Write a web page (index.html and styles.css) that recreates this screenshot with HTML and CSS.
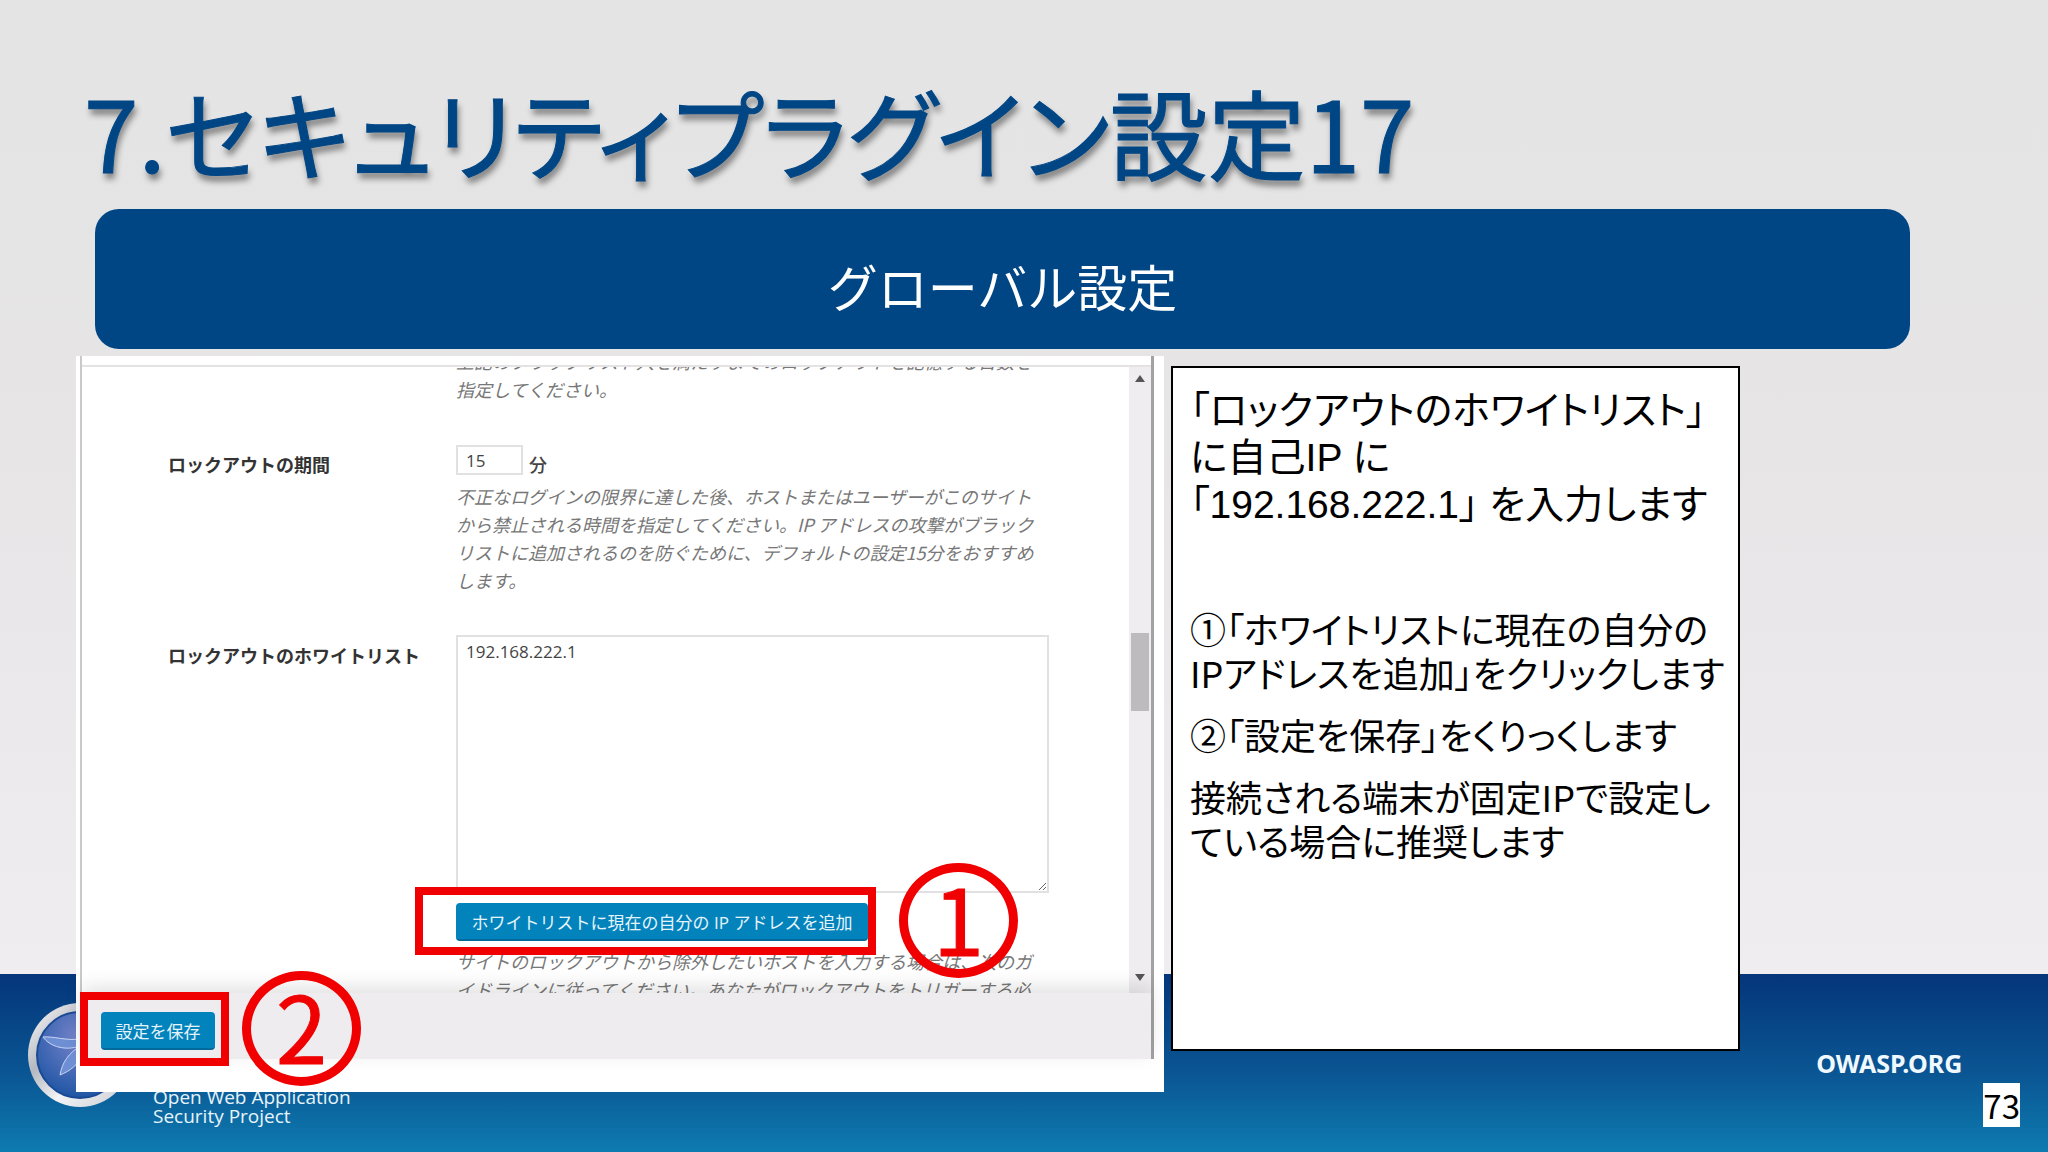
FILE: index.html
```html
<!DOCTYPE html>
<html lang="ja">
<head>
  <meta charset="UTF-8" />
  <meta name="viewport" content="width=device-width, initial-scale=1.0"/>
  <title>7.セキュリティプラグイン設定17</title>
  <link rel="stylesheet" href="styles.css">
</head>
<body>
  <div class="slide">
    <footer class="footer">
      <div class="brand">
        <svg class="brand-logo" viewBox="0 0 104 104" aria-hidden="true">
          <defs>
            <linearGradient id="ring" x1="0" y1="0" x2="1" y2="1">
              <stop offset="0" stop-color="#ffffff"/>
              <stop offset="0.35" stop-color="#b4b8c0"/>
              <stop offset="0.6" stop-color="#f4f4f6"/>
              <stop offset="1" stop-color="#c4c8ce"/>
            </linearGradient>
            <radialGradient id="disc" cx="0.5" cy="0.3" r="0.7">
              <stop offset="0" stop-color="#7a86cc"/>
              <stop offset="1" stop-color="#1f55a4"/>
            </radialGradient>
          </defs>
          <circle cx="52" cy="52" r="52" fill="url(#ring)"/>
          <circle cx="52" cy="52" r="43" fill="url(#disc)" stroke="#1a4a94" stroke-width="2"/>
          <path d="M15 34 C26 33 38 38 52 36 L52 43 C38 48 22 44 15 34 Z" fill="#6f8fd4" stroke="#c9d6f5" stroke-width="1"/>
          <path d="M32 72 C34 60 40 50 54 42 L56 50 C50 62 42 68 32 72 Z" fill="#6f8fd4" stroke="#c9d6f5" stroke-width="1"/>
        </svg>
        <p class="brand-name">Open Web Application<br>Security Project</p>
      </div>
      <a class="site-link" href="#">OWASP.ORG</a>
      <span class="page-number">73</span>
    </footer>

    <h1 class="title">7.セキュリティプラグイン設定17</h1>
    <div class="banner">グローバル設定</div>

    <div class="content">
      <form class="capture">
        <div class="window">
          <div class="scroll-area">
            <div class="settings">
              <p class="hint hint-first">上記のブラックリスト入を満たすまでのロックアウトを記憶する日数を<br>指定してください。</p>

              <label class="name" for="period">ロックアウトの期間</label>
              <div class="field">
                <div class="period">
                  <input class="text-box" id="period" type="text" value="15">
                  <span class="unit">分</span>
                </div>
                <p class="hint">不正なログインの限界に達した後、ホストまたはユーザーがこのサイト<br>から禁止される時間を指定してください。IP アドレスの攻撃がブラック<br>リストに追加されるのを防ぐために、デフォルトの設定15分をおすすめ<br>します。</p>
              </div>

              <label class="name" for="whitelist">ロックアウトのホワイトリスト</label>
              <div class="field">
                <textarea class="text-box list-box" id="whitelist">192.168.222.1</textarea>
                <div class="add-row">
                  <button class="btn btn-add" type="button">ホワイトリストに現在の自分の IP アドレスを追加</button>
                  <span class="mark mark-add"></span>
                </div>
                <p class="hint">サイトのロックアウトから除外したいホストを入力する場合は、次のガ<br>イドラインに従ってください。あなたがロックアウトをトリガーする必</p>
              </div>
            </div>
            <div class="scrollbar">
              <span class="arrow arrow-up"></span>
              <span class="thumb"></span>
              <span class="arrow arrow-down"></span>
            </div>
          </div>
          <div class="save-bar">
            <button class="btn btn-save" type="button">設定を保存</button>
            <span class="mark mark-save"></span>
          </div>
        </div>
        <span class="step step-one">1</span>
        <span class="step step-two">2</span>
      </form>

      <div class="notes">
        <p class="lead">「ロックアウトのホワイトリスト」<br>に自己IP に<br>「192.168.222.1」 を入力します</p>
        <p>①「ホワイトリストに現在の自分の<br>IPアドレスを追加」をクリックします</p>
        <p>②「設定を保存」をくりっくします</p>
        <p>接続される端末が固定IPで設定し<br>ている場合に推奨します</p>
      </div>
    </div>
  </div>
</body>
</html>
```

FILE: styles.css
```css
* {
  box-sizing: border-box;
}
body {
  margin: 0;
  font-family: "Noto Sans CJK JP", sans-serif;
  color: #000;
}
p {
  margin: 0;
}
.slide {
  position: relative;
  min-height: 100vh;
  overflow: hidden;
  background: linear-gradient(#e4e4e4, #e7e5e6 40%, #efedf0 84%);
}

/* title and banner */
.title {
  margin: 0;
  padding: 58px 84px 6px;
  font-size: 98px;
  font-weight: 400;
  line-height: 145px;
  font-feature-settings: "palt";
  color: #004685;
  -webkit-text-stroke: 1px #004685;
  text-shadow: 2px 6px 6px rgba(0, 0, 0, 0.45);
}
.banner {
  position: relative;
  display: flex;
  align-items: center;
  justify-content: center;
  height: 140px;
  margin: 0 138px 0 95px;
  padding-top: 12px;
  border-radius: 24px;
  background: #004685;
  color: #fff;
  font-size: 50px;
  line-height: 60px;
}

/* two boxes under the banner */
.content {
  position: relative;
  display: grid;
  grid-template-columns: minmax(0, 1088fr) minmax(0, 569fr) 301fr;
  align-items: start;
  gap: 7px;
  padding: 7px 0 60px 76px;
}
.capture {
  position: relative;
  padding: 0 10px 33px 4px;
  background: #fff;
}
.window {
  border-left: 2px solid #c9c9cb;
  border-right: 3px solid #a2a2a4;
  padding-top: 9px;
}
.scroll-area {
  display: flex;
  height: 628px;
  overflow: hidden;
  border-top: 2px solid #e4e2e2;
}
.settings {
  flex: 1;
  display: grid;
  grid-template-columns: 288px 1fr;
  align-content: start;
  row-gap: 41px;
  margin-top: -20px;
  padding: 0 80px 0 86px;
}
.hint {
  font-size: 18px;
  line-height: 28px;
  font-style: italic;
  color: #777;
  white-space: nowrap;
}
.hint-first {
  grid-column: 2;
}
.name {
  padding-top: 6px;
  font-size: 18px;
  font-weight: 700;
  line-height: 28px;
  color: #333;
}
.field {
  display: flex;
  flex-direction: column;
  gap: 6px;
}
.period {
  display: flex;
  align-items: center;
  gap: 6px;
}
.text-box {
  width: 67px;
  height: 30px;
  padding: 0 8px;
  border: 2px solid #e2e0e3;
  background: #fff;
  font-family: "Open Sans", sans-serif;
  font-size: 17px;
  color: #444;
}
.list-box {
  display: block;
  width: 100%;
  height: 258px;
  padding: 3px 8px;
}
.unit {
  padding-top: 8px;
  font-size: 18px;
  font-weight: 500;
  line-height: 24px;
  color: #444;
}
.btn {
  display: block;
  height: 38px;
  padding: 0;
  border: 0;
  border-bottom: 2px solid #016a9b;
  border-radius: 4px;
  background: #0383bc;
  color: #e6f4fa;
  font-family: "Open Sans", "Noto Sans CJK JP", sans-serif;
  font-size: 17px;
}
.add-row {
  position: relative;
  padding-top: 4px;
}
.btn-add {
  width: 412px;
}
.btn-save {
  width: 114px;
}
.mark {
  position: absolute;
  border: 8px solid #f00000;
}
.mark-add {
  top: -12px;
  left: -41px;
  width: 461px;
  height: 68px;
}
.scrollbar {
  flex: 0 0 22px;
  display: flex;
  flex-direction: column;
  align-items: center;
  padding: 8px 0 12px;
  background: #efedf0;
}
.arrow {
  border: 5px solid transparent;
}
.arrow-up {
  border-top: 0;
  border-bottom: 7px solid #555;
}
.thumb {
  width: 18px;
  height: 78px;
  margin: 251px 0 auto;
  background: #bdbbbe;
}
.arrow-down {
  border-bottom: 0;
  border-top: 7px solid #555;
}
.save-bar {
  position: relative;
  padding: 19px 19px 9px;
  background: #eeecef;
  box-shadow: 0 -6px 18px rgba(0, 0, 0, 0.12);
}
.mark-save {
  top: -1px;
  left: -2px;
  width: 149px;
  height: 74px;
}
.step {
  position: absolute;
  width: 119px;
  height: 115px;
  border: 9px solid #f00000;
  border-radius: 50%;
  color: #f00000;
  font-size: 92px;
  line-height: 88px;
  text-align: center;
  -webkit-text-stroke: 1px #f00000;
}
.step-one {
  right: 146px;
  bottom: 114px;
}
.step-two {
  left: 166px;
  bottom: 6px;
}

/* explanation on the right */
.notes {
  display: flex;
  flex-direction: column;
  gap: 18px;
  min-height: 685px;
  margin-top: 10px;
  padding: 19px 17px;
  border: 2px solid #000;
  background: #fff;
  font-size: 36px;
  line-height: 44px;
  font-feature-settings: "palt";
  white-space: nowrap;
}
.lead {
  margin-bottom: 60px;
  font-family: "Liberation Sans", "Noto Sans CJK JP", sans-serif;
  font-size: 39px;
  line-height: 47px;
}

/* blue band along the bottom edge */
.footer {
  position: absolute;
  right: 0;
  bottom: 0;
  left: 0;
  display: flex;
  align-items: flex-start;
  height: 178px;
  padding: 29px 28px 0;
  background: linear-gradient(#04367a, #0a5593 55%, #0e7bb0);
  color: #e8f4fb;
}
.brand {
  display: flex;
  gap: 21px;
  margin-right: auto;
}
.brand-logo {
  width: 104px;
  height: 104px;
}
.brand-name {
  padding-top: 85px;
  font-family: "Open Sans", sans-serif;
  font-size: 19px;
  line-height: 19px;
}
.site-link {
  padding-top: 42px;
  font-family: "Noto Sans", sans-serif;
  font-size: 25px;
  font-weight: 700;
  line-height: 36px;
  color: #f0f9ff;
  text-decoration: none;
}
.page-number {
  margin: 80px 0 0 21px;
  background: #fff;
  color: #000;
  font-size: 33px;
  line-height: 44px;
}
```
